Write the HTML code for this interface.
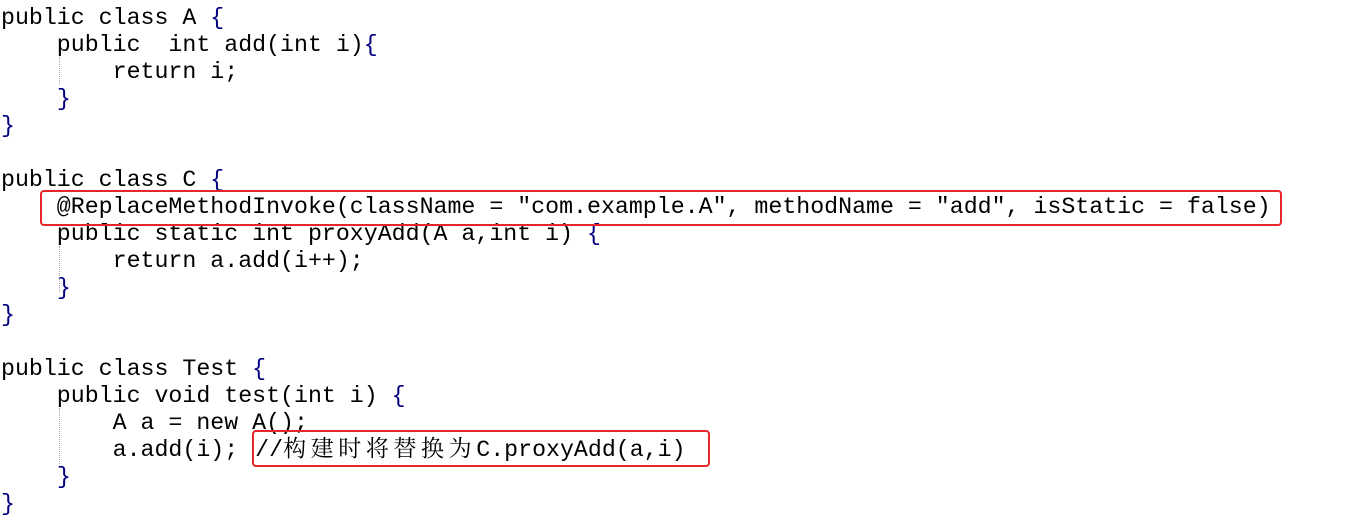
<!DOCTYPE html>
<html><head><meta charset="utf-8"><style>
html,body{margin:0;padding:0;background:#fff;width:1346px;height:532px;overflow:hidden;position:relative}
pre{position:absolute;left:1px;top:5px;margin:0;font-family:"Liberation Mono","Courier New",monospace;font-size:23.25px;line-height:27px;color:#000}
.b{color:#000080}
.cj{font-family:"Noto Serif CJK SC","Noto Sans CJK SC",sans-serif;font-size:23px;letter-spacing:4.6px;line-height:10px;display:inline-block;vertical-align:baseline}
.box{position:absolute;border:2px solid #e8262a;border-radius:4px}
.g{position:absolute;left:59px;width:0;border-left:1px dotted #aaa}
</style></head><body>
<pre>public class A <span class="b">{</span>
    public  int add(int i)<span class="b">{</span>
        return i;
    <span class="b">}</span>
<span class="b">}</span>

public class C <span class="b">{</span>
    @ReplaceMethodInvoke(className = "com.example.A", methodName = "add", isStatic = false)
    public static int proxyAdd(A a,int i) <span class="b">{</span>
        return a.add(i++);
    <span class="b">}</span>
<span class="b">}</span>

public class Test <span class="b">{</span>
    public void test(int i) <span class="b">{</span>
        A a = new A();
        a.add(i); <span style="margin-left:3px">//</span><span class="cj">构建时将替换为</span>C.proxyAdd(a,i)
    <span class="b">}</span>
<span class="b">}</span></pre>
<div class="g" style="top:57px;height:28px"></div>
<div class="g" style="top:246px;height:46px"></div>
<div class="g" style="top:408px;height:56px"></div>
<div class="box" style="left:40px;top:190px;width:1238px;height:32px"></div>
<div class="box" style="left:252px;top:430px;width:454px;height:33px"></div>
</body></html>
